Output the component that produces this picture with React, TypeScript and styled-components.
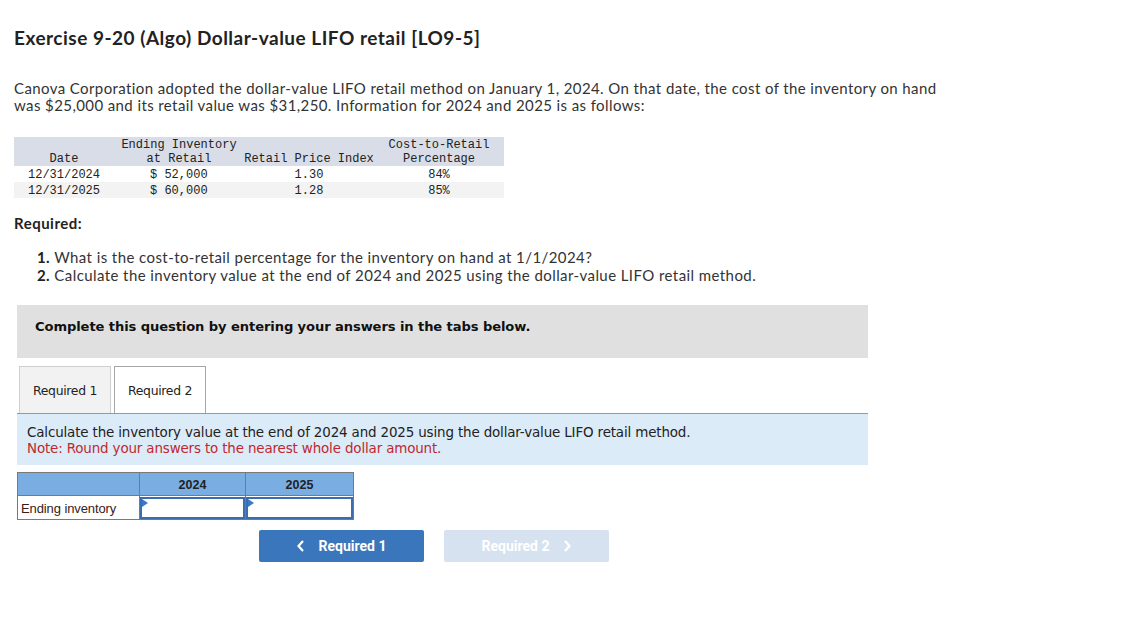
import React from "react";
import styled, { createGlobalStyle } from "styled-components";

const Global = createGlobalStyle`
  html, body { margin: 0; padding: 0; background: #fff; }
  body { font-family: Lato, "Open Sans", sans-serif; color: #222; }
`;

const Page = styled.div`
  padding: 24px 14px 40px 14px;
  width: 1138px;
  box-sizing: border-box;
`;

const Title = styled.h1`
  margin: 2px 0 0 0;
  font-family: Lato, sans-serif;
  font-weight: 700;
  font-size: 19px;
  letter-spacing: 0.5px;
  line-height: 24px;
  color: #222;
`;

const Intro = styled.p`
  margin: 30px 0 0 0;
  font-size: 15px;
  line-height: 17px;
  letter-spacing: 0.4px;
  color: #333;
  width: 940px;
`;

const DataTable = styled.table`
  margin-top: 23px;
  border-collapse: collapse;
  font-family: "Liberation Mono", "DejaVu Sans Mono", monospace;
  font-size: 12px;
  color: #222;
`;

const Th = styled.th<{ $w: number }>`
  width: ${(p) => p.$w}px;
  height: 29px;
  background: #d9dde7;
  font-weight: 400;
  text-align: center;
  vertical-align: bottom;
  padding: 0;
  line-height: 14px;
  white-space: pre;
`;

const Tr = styled.tr<{ $alt?: boolean }>`
  background: ${(p) => (p.$alt ? "#f3f3f3" : "#fff")};
`;

const Td = styled.td<{ $align?: string; $pad?: number }>`
  height: 15px;
  text-align: ${(p) => p.$align || "center"};
  padding: 1px 0 0 ${(p) => p.$pad || 0}px;
  white-space: pre;
  line-height: 14px;
`;

const ReqHead = styled.div`
  margin-top: 16px;
  font-size: 15px;
  font-weight: 700;
  line-height: 18px;
  letter-spacing: 0.5px;
  color: #222;
`;

const ReqList = styled.ol`
  margin: 16px 0 0 0;
  padding: 0 0 0 23px;
  list-style: none;
  font-size: 15px;
  line-height: 18px;
  letter-spacing: 0.42px;
  color: #333;
`;

const ReqItem = styled.li`
  margin: 0;
`;

const Num = styled.b`
  color: #222;
  font-weight: 700;
`;

const Section = styled.div`
  margin: 21px 0 0 3px;
  width: 851px;
  font-family: "DejaVu Sans", Verdana, sans-serif;
`;

const Instruction = styled.div`
  background: #e0e0e0;
  height: 53px;
  box-sizing: border-box;
  padding: 14px 0 0 18px;
  font-family: "DejaVu Sans", Verdana, sans-serif;
  font-weight: 700;
  font-size: 13.1px;
  color: #111;
  letter-spacing: -0.1px;
`;

const TabBar = styled.div`
  margin-top: 8px;
  display: flex;
  gap: 3px;
  padding-left: 2px;
`;

const Tab = styled.div<{ $active?: boolean }>`
  width: 92px;
  height: 47px;
  box-sizing: border-box;
  display: flex;
  align-items: center;
  justify-content: center;
  font-family: "DejaVu Sans", Verdana, sans-serif;
  font-size: 12.4px;
  color: #222;
  background: ${(p) => (p.$active ? "#fff" : "#f2f2f2")};
  border: 1px solid ${(p) => (p.$active ? "#a6a6a6" : "#cfcfcf")};
  border-bottom: none;
  letter-spacing: -0.3px;
`;

const NoteBox = styled.div`
  border-top: 1px solid #999;
  background: #dbebf8;
  height: 52px;
  box-sizing: border-box;
  padding: 11px 0 0 10px;
  font-family: "DejaVu Sans", Verdana, sans-serif;
  font-size: 13.45px;
  line-height: 16px;
  color: #222;
  letter-spacing: -0.15px;
`;

const Note = styled.div`
  color: #c0282d;
`;

const AnswerTable = styled.table`
  margin-top: 7px;
  border-collapse: collapse;
  font-family: "Liberation Sans", Arial, sans-serif;
  font-size: 13px;
`;

const AHead = styled.th<{ $w: number }>`
  width: ${(p) => p.$w}px;
  height: 21px;
  background: #7aaee3;
  border: 1px solid #7a7a7a;
  font-weight: 700;
  font-size: 12.5px;
  color: #222;
  padding: 1px 0 0 0;
`;

const ALabel = styled.td`
  height: 22px;
  border: 1px solid #7a7a7a;
  padding: 1px 0 0 3px;
  color: #3a1a1a;
  letter-spacing: -0.1px;
`;

const ACell = styled.td`
  border: 1px solid #7a7a7a;
  padding: 0;
  height: 22px;
`;

const InputBox = styled.div`
  position: relative;
  height: 22px;
  margin: 0;
  border: 2px solid #3a6cb0;
  box-sizing: border-box;
  background: #fff;
  &::before {
    content: "";
    position: absolute;
    left: 0;
    top: 0;
    border-top: 4px solid transparent;
    border-bottom: 4px solid transparent;
    border-left: 6px solid #3a78c8;
  }
`;

const NavRow = styled.div`
  margin: 10px 0 0 242px;
  display: flex;
  gap: 20px;
`;

const NavButton = styled.button<{ $disabled?: boolean }>`
  width: 165px;
  height: 32px;
  border: none;
  border-radius: 2px;
  background: ${(p) => (p.$disabled ? "#d6e2f0" : "#3a76bb")};
  color: #fff;
  font-family: Roboto, sans-serif;
  font-weight: 700;
  font-size: 14px;
  display: flex;
  align-items: center;
  justify-content: center;
  gap: 14px;
  padding: 0;
  cursor: pointer;
`;

const Chevron = ({ dir }: { dir: "left" | "right" }) => (
  <svg width="8" height="12" viewBox="0 0 8 12">
    <path
      d={dir === "left" ? "M6 1 L1.5 6 L6 11" : "M2 1 L6.5 6 L2 11"}
      fill="none"
      stroke="#fff"
      strokeWidth="2.2"
    />
  </svg>
);

export default function App() {
  return (
    <>
      <Global />
      <Page>
        <Title>Exercise 9-20 (Algo) Dollar-value LIFO retail [LO9-5]</Title>
        <Intro>
          Canova Corporation adopted the dollar-value LIFO retail method on January 1, 2024. On that date, the cost of the inventory on hand was $25,000 and its retail value was $31,250. Information for 2024 and 2025 is as follows:
        </Intro>
        <DataTable>
          <thead>
            <tr>
              <Th $w={100}>Date</Th>
              <Th $w={130}>{"Ending Inventory\nat Retail"}</Th>
              <Th $w={130}>Retail Price Index</Th>
              <Th $w={130}>{"Cost-to-Retail\nPercentage"}</Th>
            </tr>
          </thead>
          <tbody>
            <Tr>
              <Td>12/31/2024</Td>
              <Td $align="left" $pad={36}>$ 52,000</Td>
              <Td>1.30</Td>
              <Td>84%</Td>
            </Tr>
            <Tr $alt>
              <Td>12/31/2025</Td>
              <Td $align="left" $pad={36}>$ 60,000</Td>
              <Td>1.28</Td>
              <Td>85%</Td>
            </Tr>
          </tbody>
        </DataTable>
        <ReqHead>Required:</ReqHead>
        <ReqList>
          <ReqItem>
            <Num>1.</Num> What is the cost-to-retail percentage for the inventory on hand at 1/1/2024?
          </ReqItem>
          <ReqItem>
            <Num>2.</Num> Calculate the inventory value at the end of 2024 and 2025 using the dollar-value LIFO retail method.
          </ReqItem>
        </ReqList>
        <Section>
          <Instruction>Complete this question by entering your answers in the tabs below.</Instruction>
          <TabBar>
            <Tab>Required 1</Tab>
            <Tab $active>Required 2</Tab>
          </TabBar>
          <NoteBox>
            Calculate the inventory value at the end of 2024 and 2025 using the dollar-value LIFO retail method.
            <Note>Note: Round your answers to the nearest whole dollar amount.</Note>
          </NoteBox>
          <AnswerTable>
            <thead>
              <tr>
                <AHead $w={121}></AHead>
                <AHead $w={105}>2024</AHead>
                <AHead $w={107}>2025</AHead>
              </tr>
            </thead>
            <tbody>
              <tr>
                <ALabel>Ending inventory</ALabel>
                <ACell><InputBox /></ACell>
                <ACell><InputBox /></ACell>
              </tr>
            </tbody>
          </AnswerTable>
          <NavRow>
            <NavButton>
              <Chevron dir="left" />
              Required 1
            </NavButton>
            <NavButton $disabled>
              Required 2
              <Chevron dir="right" />
            </NavButton>
          </NavRow>
        </Section>
      </Page>
    </>
  );
}
